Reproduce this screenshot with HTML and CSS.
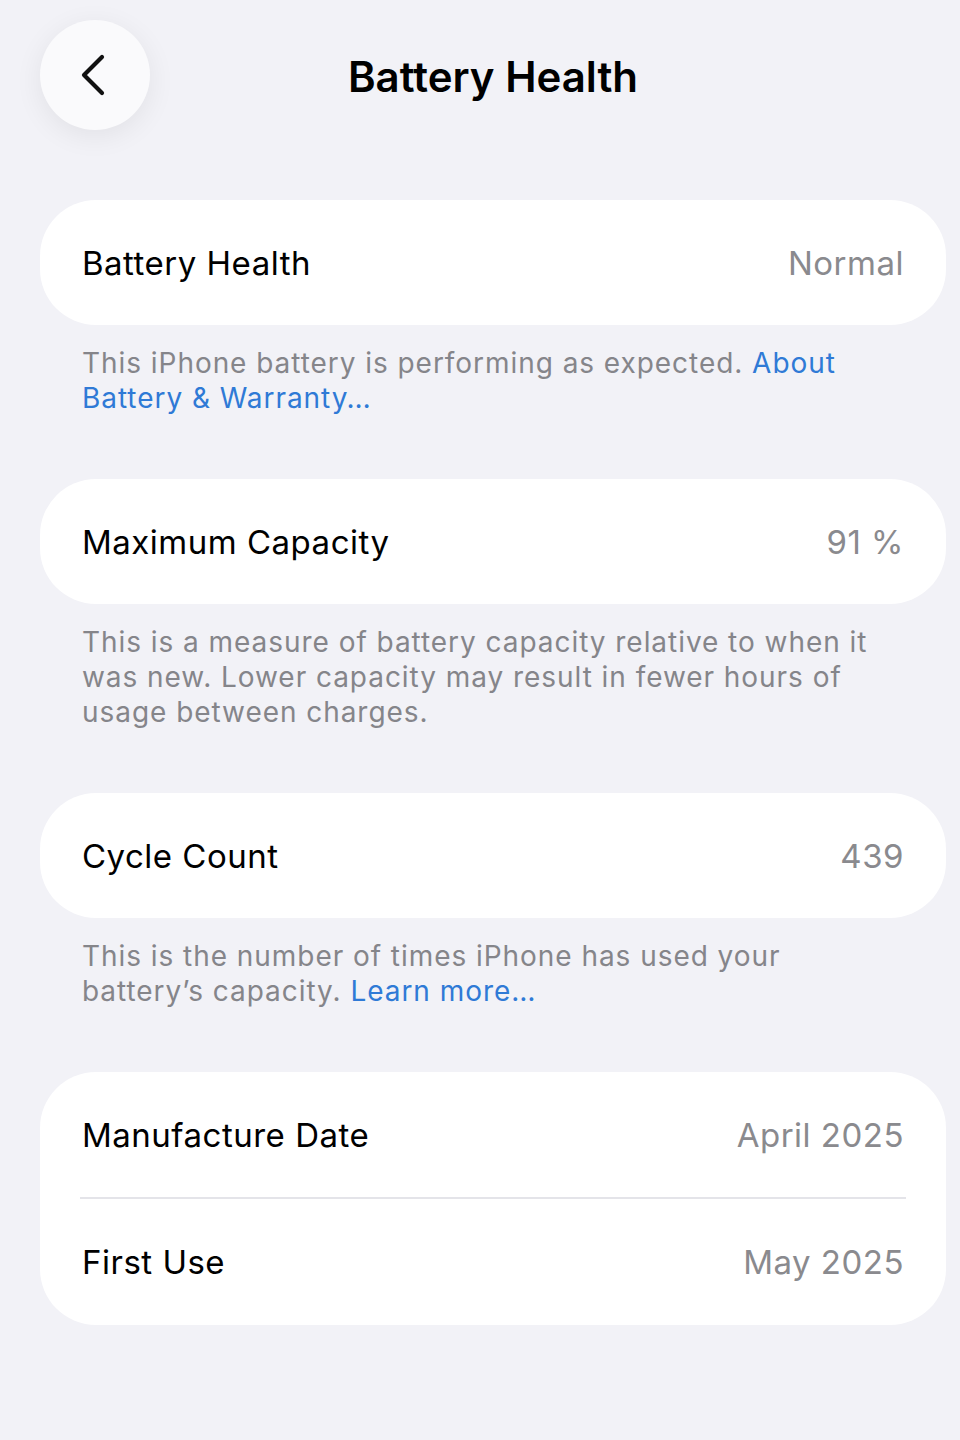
FILE: index.html
```html
<!DOCTYPE html>
<html lang="en">
<head>
<meta charset="utf-8">
<title>Battery Health</title>
<link rel="stylesheet" href="styles.css">
</head>
<body>
<div class="page">
  <header class="header">
    <button class="back" aria-label="Back">
      <svg width="30" height="44" viewBox="0 0 30 44" aria-hidden="true">
        <path d="M22 4 L4 22 L22 40" fill="none" stroke="#111" stroke-width="4.2" stroke-linecap="round" stroke-linejoin="round"/>
      </svg>
    </button>
    <h1 class="title">Battery Health</h1>
    <span class="spacer"></span>
  </header>

  <section class="group">
    <div class="card">
      <div class="row"><span class="label">Battery Health</span><span class="value">Normal</span></div>
    </div>
    <p class="footer">This iPhone battery is performing as expected. <a class="link">About Battery &amp; Warranty…</a></p>
  </section>

  <section class="group">
    <div class="card">
      <div class="row"><span class="label">Maximum Capacity</span><span class="value">91 %</span></div>
    </div>
    <p class="footer">This is a measure of battery capacity relative to when it was new. Lower capacity may result in fewer hours of usage between charges.</p>
  </section>

  <section class="group">
    <div class="card">
      <div class="row"><span class="label">Cycle Count</span><span class="value">439</span></div>
    </div>
    <p class="footer">This is the number of times iPhone has used your battery’s capacity. <a class="link">Learn more…</a></p>
  </section>

  <section class="group">
    <div class="card">
      <div class="row"><span class="label">Manufacture Date</span><span class="value">April 2025</span></div>
      <div class="sep"></div>
      <div class="row"><span class="label">First Use</span><span class="value">May 2025</span></div>
    </div>
  </section>
</div>
</body>
</html>
```

FILE: styles.css
```css
html, body {
  margin: 0;
  padding: 0;
}
body {
  background: #f2f2f7;
  font-family: Inter, "Noto Sans", "Liberation Sans", sans-serif;
  color: #000;
  width: 960px;
  min-height: 1440px;
}
.page {
  display: flex;
  flex-direction: column;
}
.header {
  display: grid;
  grid-template-columns: 110px 1fr 84px;
  align-items: center;
  padding: 20px 40px 0 40px;
  height: 110px;
}
.back {
  width: 110px;
  height: 110px;
  border-radius: 50%;
  border: none;
  background: #fafafc;
  box-shadow: 0 6px 28px rgba(0, 0, 0, 0.07);
  display: flex;
  align-items: center;
  justify-content: center;
  padding: 0;
}
.title {
  margin: 0;
  text-align: center;
  font-size: 42px;
  font-weight: 600;
  letter-spacing: 0;
  padding-top: 2px;
}
.group {
  display: flex;
  flex-direction: column;
}
.header + .group {
  margin-top: 70px;
}
.card {
  background: #fff;
  border-radius: 56px;
  margin: 0 14px 0 40px;
  display: flex;
  flex-direction: column;
}
.row {
  height: 125px;
  display: flex;
  align-items: center;
  justify-content: space-between;
  padding: 0 42px;
  font-size: 33px;
  letter-spacing: 0.5px;
}
.row + .sep + .row {
  height: 126px;
}
.value {
  color: #8a8a8e;
}
.sep {
  height: 2px;
  background: #e4e4e9;
  margin: 0 40px 0 40px;
}
.footer {
  margin: 0;
  padding: 21px 66px 0 82px;
  font-size: 28px;
  line-height: 35px;
  color: #85858a;
  letter-spacing: 0.95px;
  margin-bottom: 63px;
}
.link {
  color: #2f7ad6;
}
```
